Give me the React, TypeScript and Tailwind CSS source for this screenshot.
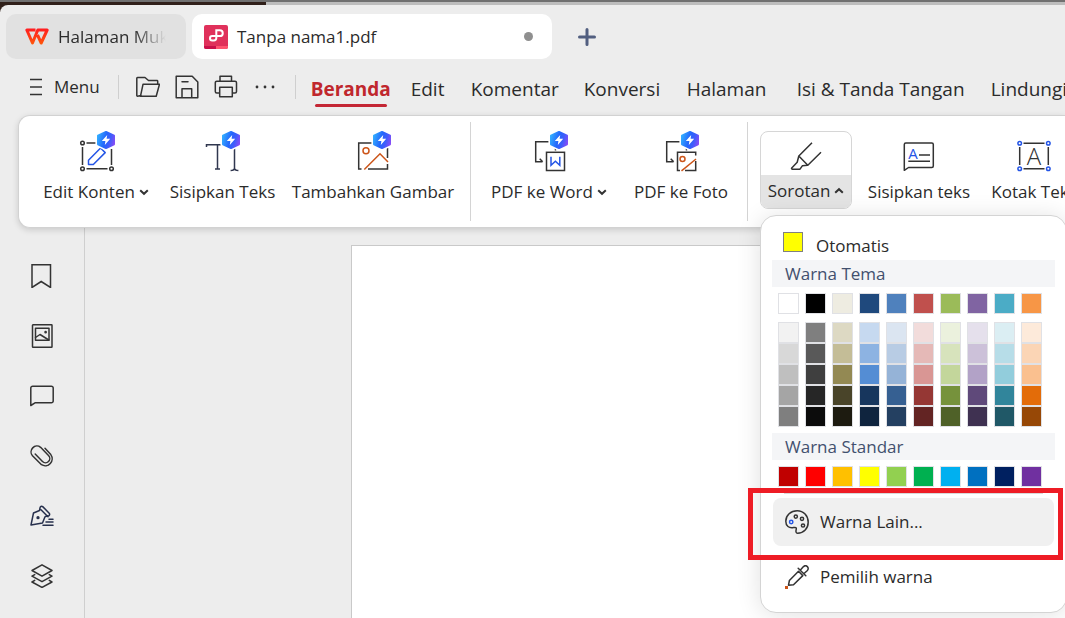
import { useState, type ReactNode } from 'react'
import clsx from 'clsx'

const menuTabs = [
  { name: 'Beranda', width: 'w-[100px]' },
  { name: 'Edit', width: 'w-[60px]' },
  { name: 'Komentar', width: 'w-[113px]' },
  { name: 'Konversi', width: 'w-[103px]' },
  { name: 'Halaman', width: 'w-[110px]' },
  { name: 'Isi & Tanda Tangan', width: 'w-[194px]' },
  { name: 'Lindungi', width: 'w-[100px]' },
]

const themeColors = ['#ffffff', '#000000', '#eeece1', '#1f497d', '#4f81bd', '#c0504d', '#9bbb59', '#8064a2', '#4bacc6', '#f79646']

const themeShades = [
  ['#f2f2f2', '#7f7f7f', '#ddd9c3', '#c6d9f0', '#dbe5f1', '#f2dcdb', '#ebf1dd', '#e5e0ec', '#dbeef3', '#fdeada'],
  ['#d8d8d8', '#595959', '#c4bd97', '#8db3e2', '#b8cce4', '#e5b9b7', '#d7e3bc', '#ccc1d9', '#b7dde8', '#fbd5b5'],
  ['#bfbfbf', '#3f3f3f', '#938953', '#548dd4', '#95b3d7', '#d99694', '#c3d69b', '#b2a2c7', '#92cddc', '#fac08f'],
  ['#a5a5a5', '#262626', '#494429', '#17365d', '#366092', '#953734', '#76923c', '#5f497a', '#31859b', '#e36c09'],
  ['#7f7f7f', '#0c0c0c', '#1d1b10', '#0f243e', '#244061', '#632423', '#4f6128', '#3f3151', '#205867', '#974806'],
]

const standardColors = ['#c00000', '#ff0000', '#ffc000', '#ffff00', '#92d050', '#00b050', '#00b0f0', '#0070c0', '#002060', '#7030a0']

/* ---------- icons ---------- */

function Icon({ size = 24, color = '#333', children }: { size?: number; color?: string; children: ReactNode }) {
  return (
    <svg width={size} height={size} viewBox="0 0 24 24" fill="none" stroke={color} strokeWidth="1.5" strokeLinejoin="round" strokeLinecap="round" aria-hidden="true" className="shrink-0">
      {children}
    </svg>
  )
}

function ToolIcon({ badge, children }: { badge?: number; children: ReactNode }) {
  return (
    <svg width="40" height="44" viewBox="0 0 40 44" fill="none" stroke="#333" strokeWidth="1.5" aria-hidden="true">
      {children}
      {badge && (
        <g transform={`translate(${badge} 10)`} stroke="none">
          <path d="M0-9.8 9.6-5V5L0 9.8-9.6 5V-5z" fill="#fff" stroke="#fff" strokeWidth="2" strokeLinejoin="round" />
          <path d="M0-8 8-4.3V4.3L0 8-8 4.3V-4.3z" fill="url(#badge)" stroke="url(#badge)" strokeWidth="2" strokeLinejoin="round" />
          <path d="M1.2-5-4.2 1H-.6L-1.2 5 4.2-1.2H.6z" fill="#fff" />
        </g>
      )}
    </svg>
  )
}

function Gradients() {
  return (
    <svg width="0" height="0" className="absolute" aria-hidden="true">
      <defs>
        <linearGradient id="badge" gradientUnits="userSpaceOnUse" x1="-9" y1="-2" x2="9" y2="3">
          <stop offset="0" stopColor="#32adff" />
          <stop offset=".45" stopColor="#2465fb" />
          <stop offset=".7" stopColor="#3f5dfb" />
          <stop offset="1" stopColor="#8a4cf6" />
        </linearGradient>
        <linearGradient id="wps" gradientUnits="userSpaceOnUse" x1="0" y1="0" x2="0" y2="17">
          <stop offset="0" stopColor="#ff1a22" />
          <stop offset="1" stopColor="#ff5a0a" />
        </linearGradient>
      </defs>
    </svg>
  )
}

const WpsLogo = () => (
  <svg width="24" height="18" viewBox="0 0 24 18" fill="none" stroke="url(#wps)" strokeWidth="3" strokeLinejoin="round" aria-hidden="true" className="shrink-0">
    <path d="M10.500 2H1.800L7.500 15 12.800 2H22.200L16.200 15 12.500 7" />
  </svg>
)

const PdfLogo = () => (
  <svg width="24" height="24" viewBox="0 0 24 24" fill="none" aria-hidden="true" className="shrink-0">
    <rect width="24" height="24" rx="2" fill="#e0315b" />
    <path d="M0 21h12v3H2a2 2 0 0 1-2-2z" fill="#c9104a" />
    <path d="M12 21h12v1a2 2 0 0 1-2 2H12z" fill="#ff5470" />
    <path d="M12.300 13V5.200H15.800a2.900 2.900 0 0 1 0 5.900H8.200a2.200 2.200 0 1 0 0 4.400H10a2.300 2.300 0 0 0 2.300-2.500z" stroke="#fff" strokeWidth="2" />
  </svg>
)

const Chevron = ({ up = false }: { up?: boolean }) => (
  <svg width="10" height="8" viewBox="0 0 10 8" fill="none" stroke="#333" strokeWidth="2" aria-hidden="true">
    <path d={up ? 'M1.2 5.8 5 2.2 8.8 5.8' : 'M1.2 2.2 5 5.8 8.8 2.2'} />
  </svg>
)

const EditIcon = () => (
  <ToolIcon badge={30}>
    <path d="M10.5 13H26M6.5 17v18M10.5 38.7h21M35.5 19v16" />
    <circle cx="6.5" cy="13" r="1.8" /><circle cx="6.5" cy="38.7" r="1.8" /><circle cx="35.5" cy="38.7" r="1.8" />
    <path d="M12.5 34.5v-4.2L24.6 18l4.6 4.6-11.9 11.9z" stroke="#2455e6" strokeLinejoin="round" />
  </ToolIcon>
)

const TextIcon = () => (
  <ToolIcon badge={28}>
    <path d="M3.500 17v-2.200H24M14.500 15v24M12 39h5M31.500 18v20M27.600 40.500c2.200 0 3.900-.8 3.900-2.500 0 1.700 1.700 2.500 3.900 2.500" stroke="#30374f" />
  </ToolIcon>
)

const ImageIcon = () => (
  <ToolIcon badge={29}>
    <path d="M22 13H5.700V39H8.500M34.500 18v10M15 39H34.500V34" />
    <circle cx="13" cy="20.700" r="3" stroke="#cc5418" />
    <path d="M11.300 39.500 27 23.700 35 32" stroke="#cc5418" />
  </ToolIcon>
)

const PdfWordIcon = () => (
  <ToolIcon badge={30}>
    <path d="M22 11.800H6.700V31.800H13.500M10.700 28.800 13.700 31.800M26.500 17v3.500" />
    <rect x="17.500" y="22.300" width="18" height="18.200" />
    <path d="M22 26.800V35.300L26.400 31.300 30.800 35.300V26.800" stroke="#2455e6" />
  </ToolIcon>
)

const PdfPhotoIcon = () => (
  <ToolIcon badge={29}>
    <path d="M22 11.800H5.700V31.800H12.500M9.700 28.800 12.700 31.800M25.500 17v3.500M19 40.500H16.500V22.300H34.700V25.500M34.700 31V40.500H24" />
    <circle cx="21.500" cy="29" r="2.500" stroke="#cc5418" />
    <path d="M20.500 40.800 35 29" stroke="#cc5418" />
  </ToolIcon>
)

const HighlightIcon = () => (
  <ToolIcon>
    <path d="M26 12.700 12.800 26 11.200 32.200 5.500 38.200 6.200 39.200 14 39.200 16.300 35.800 21.800 35.300 35 22.300M12.800 26 21.800 35.300" strokeLinejoin="round" />
  </ToolIcon>
)

const NoteIcon = () => (
  <ToolIcon>
    <path d="M5.300 40.300V14.500a1.500 1.500 0 0 1 1.500-1.500H32.800a1.500 1.500 0 0 1 1.500 1.500V36a1.500 1.500 0 0 1-1.500 1.500H9.500zM20 25H31M9.300 31.300H31" strokeLinejoin="round" />
    <text x="14" y="28.500" fontSize="15" fontWeight="500" textAnchor="middle" fill="#2455e6" stroke="none">A</text>
  </ToolIcon>
)

const TextBoxIcon = () => (
  <ToolIcon>
    <path d="M9.500 13.300h21M9.500 38.700h21M5.700 17v18M34.300 17v18" />
    <g stroke="#2455e6"><circle cx="5.700" cy="13.300" r="1.800" /><circle cx="34.300" cy="13.300" r="1.800" /><circle cx="5.700" cy="38.700" r="1.800" /><circle cx="34.300" cy="38.700" r="1.800" /></g>
    <text x="20" y="34.500" fontSize="24" fontWeight="300" textAnchor="middle" fill="#333" stroke="none">A</text>
  </ToolIcon>
)

const sideIcons: { label: string; icon: ReactNode }[] = [
  { label: 'Bookmark', icon: <Icon><path d="M2 .8h18.500V23.500L11.200 17.500 2 23.500z" strokeLinejoin="miter" /></Icon> },
  {
    label: 'Thumbnail',
    icon: <Icon><rect x="2.500" y=".8" width="19.500" height="22.400" rx=".5" /><rect x="5.500" y="4.200" width="13.500" height="12" /><path d="M5.500 13.500 10 10.500 18.800 16" /><circle cx="15.600" cy="8.200" r=".6" fill="#333" /></Icon>,
  },
  { label: 'Komentar', icon: <Icon><path d="M.8 21.500V4A1.800 1.800 0 0 1 2.600 2.200H21.400a1.800 1.800 0 0 1 1.800 1.800V17a1.800 1.800 0 0 1-1.800 1.800H5z" /></Icon> },
  {
    label: 'Lampiran',
    icon: <Icon><path d="M15 4.200 20.800 10.600A7 7 0 0 1 11.500 20.700L2.500 11.800A5.900 5.900 0 0 1 10.600 3.300L18.500 11.500A4 4 0 0 1 12.500 17.500L5.200 10" /></Icon>,
  },
  {
    label: 'Tanda tangan',
    icon: <Icon color="#27304d"><path d="M11 5.800 18 12.800M10 4A1.700 1.700 0 0 1 12.700 2.600L19.200 9.200A1.700 1.700 0 0 1 17.700 12L15.500 12.500M10 4 9.500 6.500 3.500 9 1 21 12.500 19 15 12.800M19 15.300h4M16 18h7M13 21.200H23" /><circle cx="8" cy="13.700" r=".9" fill="#27304d" /></Icon>,
  },
  { label: 'Lapisan', icon: <Icon><path d="M12 .8 22 6.500 12 12.200 2 6.500zM4.700 10.600 2 12.200 12 17.700 22 12.200 19.300 10.600M4.700 16.400 2 18 12 23.400 22 18 19.300 16.400" /></Icon> },
]

/* ---------- ribbon ---------- */

function ToolButton({ icon, label, width, chevron }: { icon: ReactNode; label: string; width: string; chevron?: boolean }) {
  return (
    <button className={clsx('flex h-[78px] shrink-0 flex-col items-center whitespace-nowrap text-[17px] leading-[33px]', width)}>
      <span className="-mt-px block h-[46px]">{icon}</span>
      <span className="-mt-px flex items-center gap-1">
        {label}
        {chevron && <Chevron />}
      </span>
    </button>
  )
}

/* ---------- colour menu ---------- */

function SwatchRow({ colors }: { colors: string[] }) {
  return (
    <div className="flex gap-1.5 px-1.5">
      {colors.map((c) => (
        <button key={c} title={c} className="size-[21px] border border-[#e0e1e5]" style={{ backgroundColor: c }} />
      ))}
    </div>
  )
}

function ColorMenu() {
  return (
    <div className="absolute left-0 top-[84px] z-10 w-[307px] rounded-2xl border border-[#d4d4d4] bg-white px-[11px] pt-4 pb-[11px] text-[17px] shadow-[0_2px_24px_rgba(0,0,0,0.12)]">
      <button className="flex h-7 w-full items-start gap-[13px] pl-[11px]">
        <span className="size-5 border border-[#808080] bg-[#ffff00]" />
        <span className="pt-0.5 leading-6">Otomatis</span>
      </button>
      <h3 className="h-[27px] bg-[#f4f5f7] pl-[13px] leading-[27px] text-[#42506e]">Warna Tema</h3>
      <div className="mt-1.5">
        <SwatchRow colors={themeColors} />
      </div>
      <div className="mt-2">
        {themeShades.map((row) => <SwatchRow key={row[0]} colors={row} />)}
      </div>
      <h3 className="mt-1.5 h-[27px] bg-[#f4f5f7] pl-[13px] leading-[27px] text-[#42506e]">Warna Standar</h3>
      <div className="mt-1.5">
        <SwatchRow colors={standardColors} />
      </div>
      <hr className="mx-3 mt-1.5 border-[#d8d8d8]" />
      <div className="relative mx-px mt-1">
        <button className="flex h-12 w-full items-center gap-[11px] rounded-lg bg-[#f0f0f0] pl-3">
          <Icon>
            <path d="M12.500 23.200C18.800 23.200 23.200 18.300 23.200 12.200 23.200 5.800 18.500.8 12.200.8 5.800.8.8 5.300.8 11.200.8 16 4 18.500 8.500 17.600 10.500 17.200 11.800 17.600 11.200 19.500 10.600 21.600 11 23.200 12.500 23.200z" />
            <circle cx="6.200" cy="12" r="1.700" stroke="#2455e6" />
            <circle cx="10.800" cy="6.600" r="1.600" /><circle cx="17" cy="8.800" r="1.600" /><circle cx="18" cy="15.500" r="1.600" />
          </Icon>
          Warna Lain...
        </button>
        <div className="pointer-events-none absolute -left-[25px] -right-[9px] -top-2.5 h-[72px] border-[5px] border-[#ee1c25]" />
      </div>
      <button className="mx-px mt-[7px] flex h-12 w-full items-center gap-[11px] pl-3">
        <Icon>
          <path d="M3.500 20.200 4.400 15.500 13.500 6.300 17.800 10.600 8.500 19.800zM13.200 3.200 20.800 10.800M15.200 5.200 18.500 1.600A2.700 2.700 0 0 1 22.400 5.500L18.800 8.800" />
          <path d="M0 21h3v3H0z" fill="#cc5418" stroke="none" />
        </Icon>
        Pemilih warna
      </button>
    </div>
  )
}

/* ---------- page ---------- */

export default function App() {
  const [activeTab, setActiveTab] = useState('Beranda')
  const [menuOpen, setMenuOpen] = useState(true)

  return (
    <div className="flex h-screen flex-col overflow-hidden bg-[#ededed] font-['Open_Sans','Noto_Sans',sans-serif] text-[#2b2b2b]">
      <Gradients />
      <div className="flex h-3 shrink-0 bg-[#30201a]">
        <div className="w-1/4 border-t-2 border-[#707070]" />
        <div className="flex-1 border-t-2 border-[#707070] bg-[#bdbdbd]" />
      </div>

      <header className="-mt-[7px] flex h-[54px] shrink-0 items-end gap-1.5 rounded-tl-lg bg-[#ededed] pl-1.5">
        <button className="flex h-[45px] w-[180px] items-center gap-[9px] overflow-hidden rounded-[10px] bg-[#e1e1e1] pl-[19px] pr-5 text-[17px]">
          <WpsLogo />
          <span className="overflow-hidden whitespace-nowrap [mask-image:linear-gradient(to_right,black_70%,transparent)]">Halaman Muka</span>
        </button>
        <button className="flex h-[45px] w-[360px] items-center gap-[9px] rounded-[10px] bg-white px-3 text-[17px]">
          <PdfLogo />
          Tanpa nama1.pdf
          <span className="ml-auto mr-[7px] size-[9px] rounded-full bg-[#8f8f8f]" />
        </button>
        <button aria-label="Tab baru" className="ml-5 flex h-[45px] items-center">
          <svg width="18" height="18" viewBox="0 0 18 18" stroke="#525f80" strokeWidth="3" strokeLinecap="round"><path d="M9 1.500v15M1.500 9h15" /></svg>
        </button>
      </header>

      <nav className="flex h-14 shrink-0 items-center pl-7 whitespace-nowrap">
        <button className="flex items-center gap-[11px] text-[17px]">
          <svg width="15" height="18" viewBox="0 0 15 18" stroke="#333" strokeWidth="1.500" aria-hidden="true"><path d="M2 1.500h12M2 9h12M2 16.500h12" /></svg>
          Menu
        </button>
        <div className="ml-[18px] mr-[17px] h-6 w-px shrink-0 bg-[#cfcfcf]" />
        <div className="flex items-center gap-[15px]">
          <button aria-label="Buka">
            <Icon><path d="M5 20.500 1.500 21.200a.7.7 0 0 1-.7-.7V3.200a.7.7 0 0 1 .7-.7H9L12.500 5.500H21a.7.7 0 0 1 .7.700V9M4.500 21.200H20.200L23.500 9.300H7z" /></Icon>
          </button>
          <button aria-label="Simpan">
            <Icon><path d="M1.200 22.700V1.200H17.200L22.800 7V22.700zM7 22.500V13.700h9.700v8.800M7 6.800H13" /></Icon>
          </button>
          <button aria-label="Cetak">
            <Icon><path d="M6 6V1.200H17.500V6M5.500 18H2.800A1.500 1.500 0 0 1 1.300 16.500V7.700A1.500 1.500 0 0 1 2.800 6.200H21a1.500 1.500 0 0 1 1.500 1.500V16.500A1.500 1.500 0 0 1 21 18H18.500M5.700 12.200H18.300V21.800H5.700z" /></Icon>
          </button>
          <button aria-label="Lainnya" className="ml-0.5">
            <svg width="20" height="24" viewBox="0 0 20 24" fill="#333"><circle cx="2" cy="12" r="1.400" /><circle cx="10" cy="12" r="1.400" /><circle cx="18" cy="12" r="1.400" /></svg>
          </button>
        </div>
        <div className="ml-5 mr-[15px] h-6 w-px shrink-0 bg-[#cfcfcf]" />
        {menuTabs.map((tab) => (
          <button key={tab.name} onClick={() => setActiveTab(tab.name)} className={clsx('flex shrink-0', tab.width)}>
            <span className={clsx('relative pt-1 text-[19px] leading-8', tab.name === activeTab && 'font-bold text-[#c0272d]')}>
              {tab.name}
              {tab.name === activeTab && <span className="absolute inset-x-1 -bottom-0.5 h-[3px] rounded-full bg-[#c42735]" />}
            </span>
          </button>
        ))}
      </nav>

      <section className="relative z-10 ml-[18px] flex h-[113px] shrink-0 rounded-l-xl border border-r-0 border-[#d2d2d2] bg-white pl-3 shadow-[0_2px_6px_rgba(0,0,0,0.15)]">
        <div className="flex pt-[15px]">
          <ToolButton icon={<EditIcon />} label="Edit Konten" width="w-[130px]" chevron />
          <ToolButton icon={<TextIcon />} label="Sisipkan Teks" width="w-[123px]" />
          <ToolButton icon={<ImageIcon />} label="Tambahkan Gambar" width="w-[178px]" />
        </div>
        <div className="mt-1.5 mb-1.5 ml-2 mr-2.5 w-px shrink-0 bg-[#d4d4d4]" />
        <div className="flex pt-[15px]">
          <ToolButton icon={<PdfWordIcon />} label="PDF ke Word" width="w-[136px]" chevron />
          <ToolButton icon={<PdfPhotoIcon />} label="PDF ke Foto" width="w-[128px]" />
        </div>
        <div className="mt-1.5 mb-1.5 ml-0.5 mr-3 w-px shrink-0 bg-[#d4d4d4]" />
        <div className="flex gap-[9px] pt-[15px]">
          <div className="relative">
            <button
              onClick={() => setMenuOpen(!menuOpen)}
              aria-expanded={menuOpen}
              className="flex h-[78px] w-[92px] flex-col items-center overflow-hidden rounded-lg border border-[#d6d6d6] text-[17px] leading-[33px]"
            >
              <span className="-mt-0.5 block h-[46px]"><HighlightIcon /></span>
              <span className="flex h-[33px] w-full items-center justify-center gap-1 bg-[#e4e4e4] pb-0.5">
                Sorotan <Chevron up />
              </span>
            </button>
            {menuOpen && <ColorMenu />}
          </div>
          <div className="flex">
            <ToolButton icon={<NoteIcon />} label="Sisipkan teks" width="w-[116px]" />
            <ToolButton icon={<TextBoxIcon />} label="Kotak Teks" width="w-[114px]" />
          </div>
        </div>
      </section>

      <div className="flex flex-1">
        <aside className="flex w-[85px] shrink-0 flex-col items-center gap-9 border-r border-[#cfcfcf] pt-9">
          {sideIcons.map((item) => (
            <button key={item.label} aria-label={item.label} className="block">
              {item.icon}
            </button>
          ))}
        </aside>
        <main className="flex-1 pt-[17px] pl-[266px]">
          <div className="h-full border-t border-l border-[#c9c9c9] bg-white" />
        </main>
      </div>
    </div>
  )
}
